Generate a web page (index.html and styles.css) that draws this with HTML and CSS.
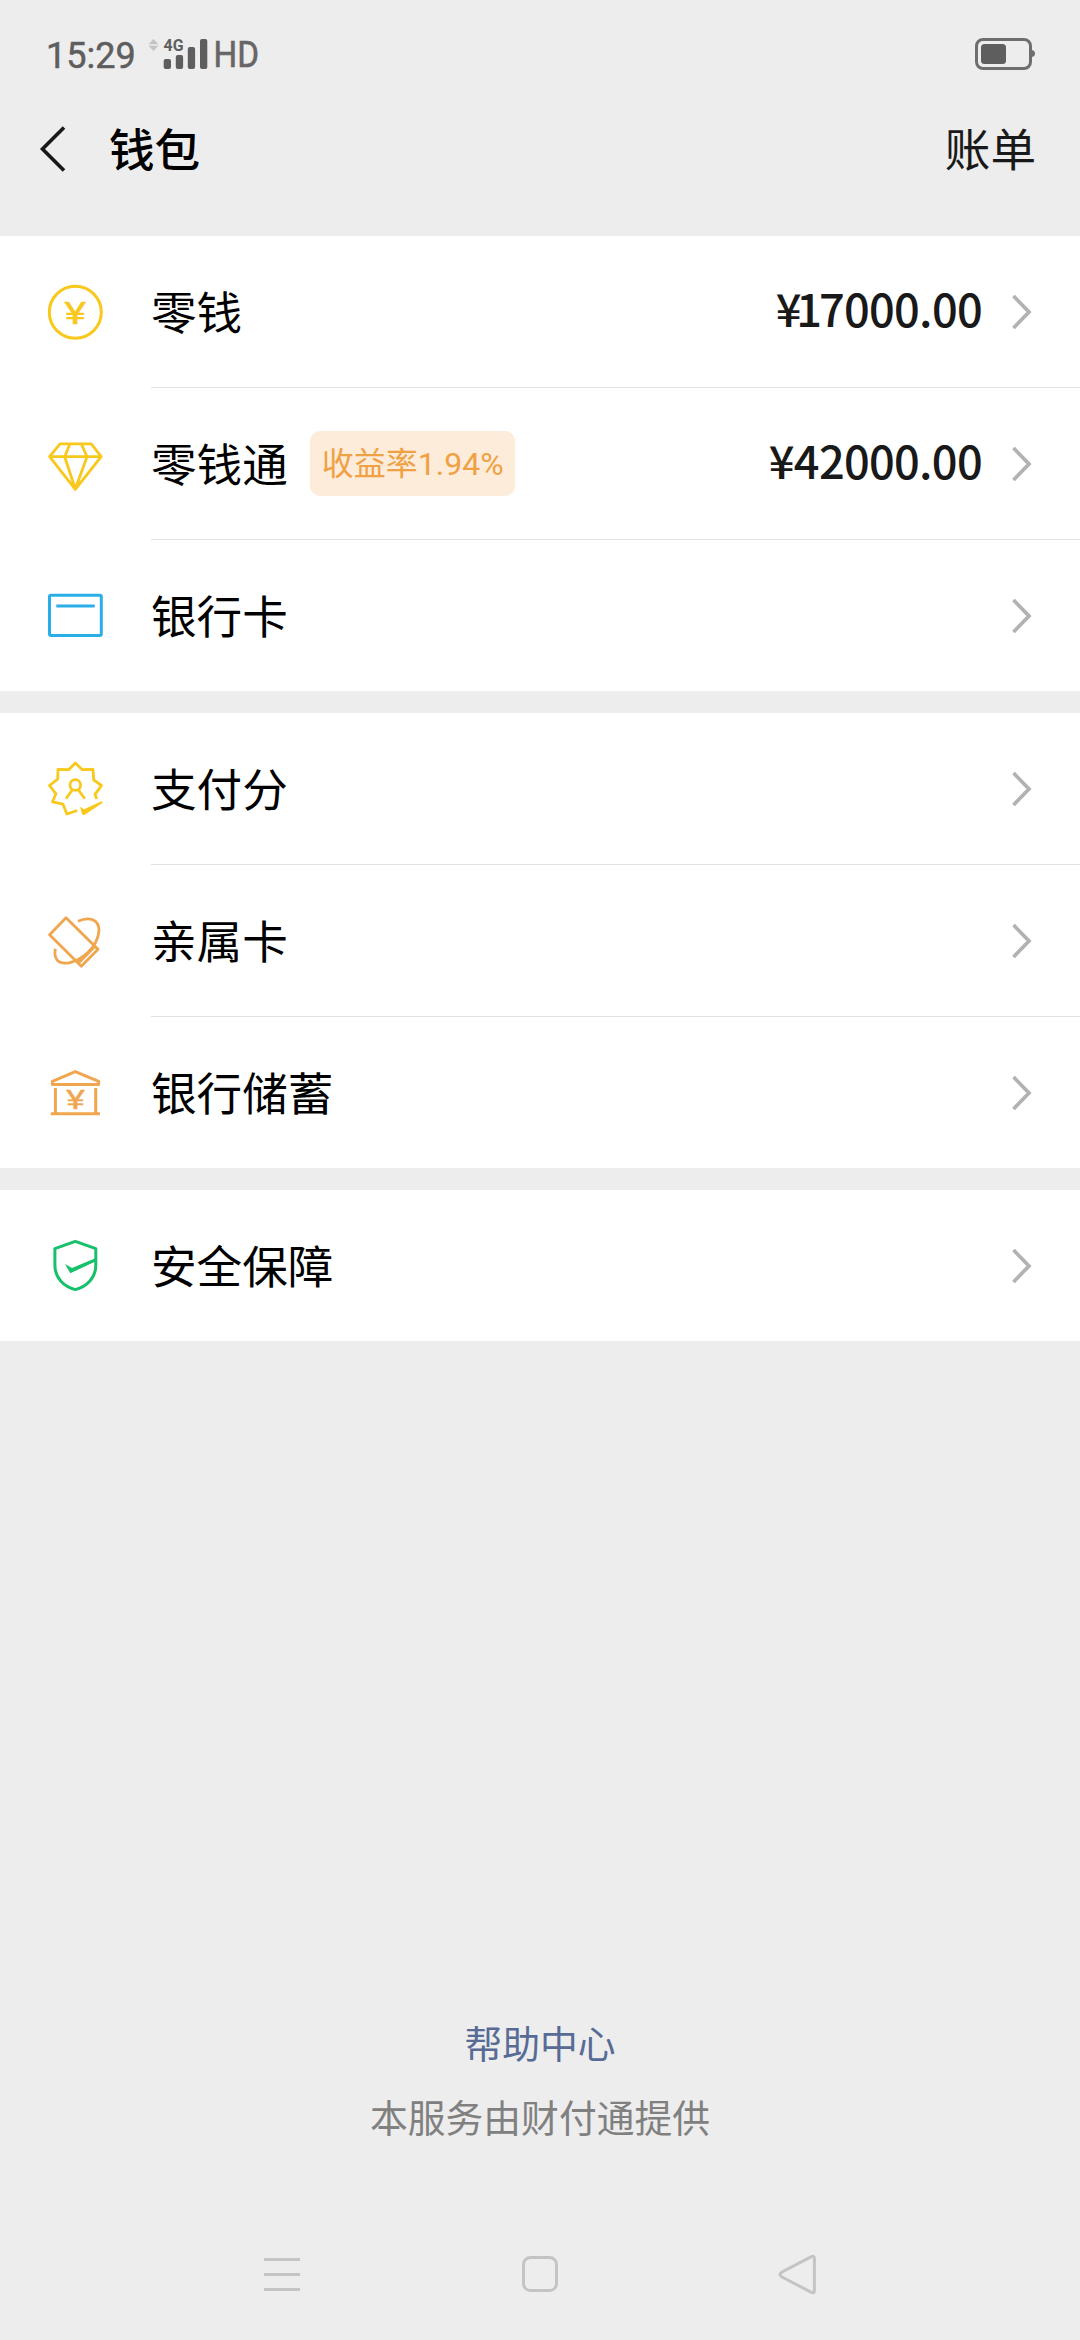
FILE: index.html
```html
<!DOCTYPE html>
<html lang="zh-CN">
<head>
<meta charset="utf-8">
<title>钱包</title>
<link rel="stylesheet" href="styles.css">
</head>
<body>
<svg class="defs" width="0" height="0">
  <symbol id="chevron" viewBox="0 0 24 40"><path d="M4.5 4L20 20L4.5 36" fill="none" stroke="#b2b2b2" stroke-width="3.7"/></symbol>
</svg>
<div class="screen">
  <header class="status">
    <span class="time">15:29</span>
    <svg class="signal" width="114" height="36" viewBox="146 36 114 36">
      <path d="M148.5 44.3L153.5 39L158.5 44.3ZM148.5 45.8H158.5L153.5 51Z" fill="#c4c4c4"/>
      <text class="net" x="163.5" y="51" textLength="20" lengthAdjust="spacingAndGlyphs">4G</text>
      <g fill="#5e5e5e">
        <rect x="163.7" y="59" width="7.3" height="10" rx="2"/>
        <rect x="175.8" y="55" width="7.3" height="14" rx="2"/>
        <rect x="187.8" y="47" width="7.3" height="22" rx="2"/>
        <rect x="200" y="39" width="7.3" height="30" rx="2"/>
      </g>
      <text class="hd" x="213.5" y="67" textLength="45.5" lengthAdjust="spacingAndGlyphs">HD</text>
    </svg>
    <svg class="battery" width="62" height="34" viewBox="974 37 62 34">
      <rect x="976.5" y="39.5" width="54" height="29" rx="6.5" fill="none" stroke="#6e6e6e" stroke-width="3"/>
      <rect x="981" y="44" width="25" height="20" rx="3.5" fill="#5e5e5e"/>
      <path d="M1032 50Q1035 50.5 1035 53.5Q1035 56.5 1032 57Z" fill="#6e6e6e"/>
    </svg>
  </header>
  <nav class="topbar">
    <svg class="back" width="28" height="48" viewBox="0 0 28 48"><path d="M25 2.5L3.5 24L25 45.5" fill="none" stroke="#191919" stroke-width="3.6"/></svg>
    <h1 class="title">钱包</h1>
    <span class="bill">账单</span>
  </nav>

  <main>
    <section class="group">
      <div class="row">
        <svg class="icon yellow" viewBox="0 0 60 59">
          <circle cx="30.3" cy="29.3" r="26"/>
          <text class="yen" x="19.3" y="41.2" font-size="31" textLength="22" lengthAdjust="spacingAndGlyphs">¥</text>
        </svg>
        <div class="cell"><span class="label">零钱</span><span class="amount">¥<span class="one">1</span>7000.00</span><svg class="chev"><use href="#chevron"/></svg></div>
      </div>
      <div class="row">
        <svg class="icon yellow thin" viewBox="0 0 60 59">
          <path d="M15 8.8H46.3L56.2 21.7L30.3 54.3L4.6 21.7ZM4.6 21.7H56.2M25 8.8L19.7 21.7L30.3 54M36.3 8.8L42 21.7L30.3 54"/>
        </svg>
        <div class="cell"><span class="label">零钱通</span><span class="badge">收益率1.94%</span><span class="amount">¥42000.00</span><svg class="chev"><use href="#chevron"/></svg></div>
      </div>
      <div class="row">
        <svg class="icon blue" viewBox="0 0 60 59">
          <rect x="4.5" y="9.2" width="51.8" height="40.4" rx="1.5"/>
          <path d="M11.3 20H49.7"/>
        </svg>
        <div class="cell"><span class="label">银行卡</span><svg class="chev"><use href="#chevron"/></svg></div>
      </div>
    </section>

    <section class="group">
      <div class="row">
        <svg class="icon yellow thin" viewBox="0 0 60 59">
          <path d="M51.7 39L50 34.3L56.5 25.5L48.7 19.8L48 9.3L37.3 9.7L30.3 3.1L23.7 9.7L13 9.3L12.7 19.2L4.5 25.5L11 33.8L7.5 41.8L18 44.2L21.9 54L32.3 50.5"/>
          <circle cx="30.3" cy="25" r="5.3"/>
          <path d="M21 38.7L27.2 30M39.8 38.7L33.5 30"/>
          <path class="solid" d="M35 46.8L39 49.3L57 41L57.5 43.1L39 55.2L37 54Z"/>
        </svg>
        <div class="cell"><span class="label">支付分</span><svg class="chev"><use href="#chevron"/></svg></div>
      </div>
      <div class="row">
        <svg class="icon orange thin" viewBox="0 0 60 59">
          <path d="M21 5.7L53 37.3L36.3 54.3L4.6 22.7Z"/>
          <path d="M33 9.2C44 4.2 54.2 7.2 54 18.5C53.5 26.5 49 35.5 42.5 40.8C37 45.8 31.5 49.3 24 50.8C14 52.3 8.5 48.5 10.3 36.8M49.3 35L34 50.5"/>
        </svg>
        <div class="cell"><span class="label">亲属卡</span><svg class="chev"><use href="#chevron"/></svg></div>
      </div>
      <div class="row">
        <svg class="icon orange" viewBox="0 0 60 59">
          <path d="M7.4 21.4V18.3L30.3 8.6L53.6 18.3V21.4ZM10.4 25V50M50.7 25V50M5.8 50.8H55"/>
          <text class="yen" x="20.9" y="45.6" font-size="26" textLength="19" lengthAdjust="spacingAndGlyphs">¥</text>
        </svg>
        <div class="cell"><span class="label">银行储蓄</span><svg class="chev"><use href="#chevron"/></svg></div>
      </div>
    </section>

    <section class="group">
      <div class="row">
        <svg class="icon green" viewBox="0 0 60 59">
          <path d="M30.3 5.3L50.8 12.7V29C50.8 42 42 50.5 30.3 53.6C18.6 50.5 9.9 42 9.9 29V12.7Z"/>
          <path class="solid" d="M20 28L27 32L51.5 21.8V24.9L25.3 37.3Z"/>
        </svg>
        <div class="cell"><span class="label">安全保障</span><svg class="chev"><use href="#chevron"/></svg></div>
      </div>
    </section>
  </main>

  <footer class="footer">
    <a class="help">帮助中心</a>
    <p class="provider">本服务由财付通提供</p>
  </footer>
  <div class="sysnav">
    <svg width="40" height="44" viewBox="0 0 40 44"><path d="M2 6.5H38M2 21.5H38M2 36.5H38"/></svg>
    <svg width="40" height="44" viewBox="0 0 40 44"><rect x="3.5" y="4.5" width="33" height="33" rx="7"/></svg>
    <svg width="40" height="44" viewBox="0 0 40 44"><path d="M33 3.8Q36.4 2 36.4 5.5V37.5Q36.4 41 33 39.2L4 24Q0 21.5 4 19Z"/></svg>
  </div>
</div>
</body>
</html>
```
FILE: styles.css
```css
* { box-sizing: border-box; margin: 0; padding: 0; }
body {
  background: #ededed;
  font-family: "Noto Sans CJK SC", sans-serif;
  color: #000;
}
.defs { display: block; }
.screen { width: 1080px; height: 2340px; display: flex; flex-direction: column; }
svg { display: block; flex: none; overflow: visible; }

.status { height: 108px; padding: 0 44px 0 46px; display: flex; align-items: center; }
.time { width: 100px; padding-top: 3px; font: 400 36px/44px Roboto, sans-serif; color: #5e5e5e; -webkit-text-stroke: 0.5px #5e5e5e; }
.net { font: 700 17px Roboto, sans-serif; fill: #5e5e5e; }
.hd { font: 400 36px Roboto, sans-serif; fill: #666; stroke: #666; stroke-width: 0.6px; }
.battery { margin-left: auto; }

.topbar { height: 128px; padding: 0 44px 46px 39px; display: flex; align-items: center; }
.title { margin: 0 0 4px 42px; font-size: 45.6px; line-height: 66px; font-weight: 500; }
.bill { margin: 0 0 4px auto; font-size: 45.6px; line-height: 66px; color: #191919; }

.group { background: #fff; margin-bottom: 22px; }
.row { display: flex; align-items: center; padding-left: 45px; }
.icon { width: 60px; height: 59px; fill: none; stroke: currentColor; stroke-width: 3; stroke-linejoin: round; }
.thin { stroke-width: 2.8; }
.solid { fill: currentColor; stroke: none; }
.yen { font-family: Roboto, sans-serif; font-weight: 400; fill: currentColor; stroke: currentColor; stroke-width: 0.4px; }
.yellow { color: #f8c81c; }
.blue { color: #2aaee8; }
.orange { color: #f0a64e; }
.green { color: #18c06c; }
.cell { flex: 1; height: 152px; margin-left: 46px; padding-right: 47px; display: flex; align-items: center; border-bottom: 1px solid #e2e2e2; }
.row:last-child .cell { height: 151px; border-bottom: 0; }
.label { margin-bottom: 4px; font-size: 45.6px; line-height: 66px; }
.badge { margin-left: 22px; height: 65px; padding: 1px 11px 0 12px; border-radius: 10px; background: #feecdb; color: #f0a144; font: 400 32px/65px Roboto, "Noto Sans CJK SC", sans-serif; }
.amount { margin: 0 0 8px auto; font: 500 45.2px/66px "Noto Sans CJK SC", sans-serif; letter-spacing: -0.7px; color: #191919; }
.one { margin: 0 -2.5px 0 -4.5px; }
.chev { width: 24px; height: 40px; }
.amount + .chev { margin-left: 27px; }
.label + .chev { margin-left: auto; }

.footer { margin-top: auto; text-align: center; font-size: 37.8px; }
.help { display: block; line-height: 56px; color: #576b95; }
.provider { margin-top: 18px; line-height: 56px; color: #808080; }
.sysnav { height: 130px; margin-top: 66px; padding: 0 262px; display: flex; align-items: center; justify-content: space-between; }
.sysnav svg { fill: none; stroke: #c4c4c4; stroke-width: 3; }
```
